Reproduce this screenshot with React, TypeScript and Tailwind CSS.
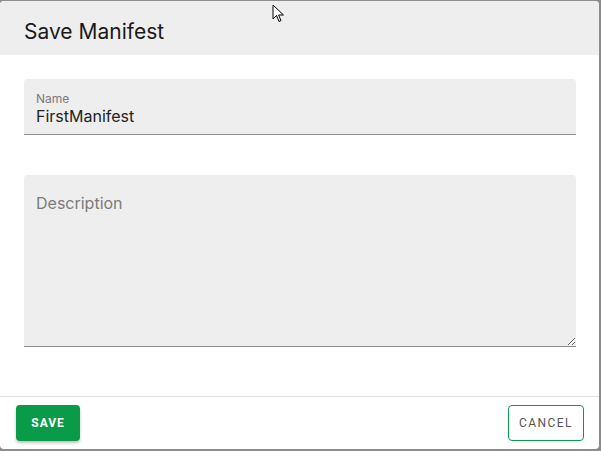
import React from "react";

export default function App() {
  return (
    <div className="relative w-[601px] h-[451px] bg-[#8c8c8c] overflow-hidden" style={{ fontFamily: "Inter, 'Noto Sans', sans-serif" }}>
      <div className="mt-[1px] w-[599px] h-[448px] bg-white rounded-[4px] overflow-hidden flex flex-col">
        <div className="h-[54px] bg-[#eeeeee] flex items-center pl-6 pt-[6px] shrink-0">
          <h2 className="text-[21px] text-[#1a1a1a] font-normal leading-none">Save Manifest</h2>
        </div>
        <div className="flex-1 pl-6 pr-[23px] pt-6 flex flex-col">
          <div className="h-[56px] bg-[#eeeeee] rounded-t-[4px] border-b border-[#8c8c8c] px-3 pt-[13px]">
            <div className="text-[12px] leading-[14px] text-[#7b7b7b]">Name</div>
            <div className="text-[16px] leading-[20px] text-[#222]">FirstManifest</div>
          </div>
          <div className="mt-10 h-[172px] bg-[#eeeeee] rounded-t-[4px] border-b border-[#8c8c8c] flex">
            <textarea
              className="flex-1 bg-transparent outline-none resize-y px-3 pt-[18px] text-[16px] leading-[20px] text-[#222] placeholder:text-[#7b7b7b]"
              placeholder="Description"
              style={{ fontFamily: "Inter, 'Noto Sans', sans-serif" }}
            />
          </div>
        </div>
        <div className="h-[53px] border-t border-[#e0e0e0] flex items-center justify-between pl-4 pr-[15px] shrink-0" style={{ fontFamily: "Roboto, 'Noto Sans', sans-serif" }}>
          <button className="h-[36px] w-[64px] rounded-[4px] bg-[#0a9b49] text-white text-[12px] font-bold tracking-[0.08em] shadow-[0_2px_3px_rgba(0,0,0,0.25)]">
            SAVE
          </button>
          <button className="h-[36px] w-[76px] rounded-[4px] border border-[#0a9b49] text-[#555] text-[12px] tracking-[0.12em] bg-white">
            CANCEL
          </button>
        </div>
      </div>
      <svg className="absolute left-[272px] top-[4px]" width="14" height="20" viewBox="0 0 14 20">
        <path d="M1 1 L1 15 L4.5 11.5 L7 17.5 L9 16.6 L6.6 11 L11.5 11 Z" fill="white" stroke="black" strokeWidth="1" strokeLinejoin="miter" />
      </svg>
    </div>
  );
}
